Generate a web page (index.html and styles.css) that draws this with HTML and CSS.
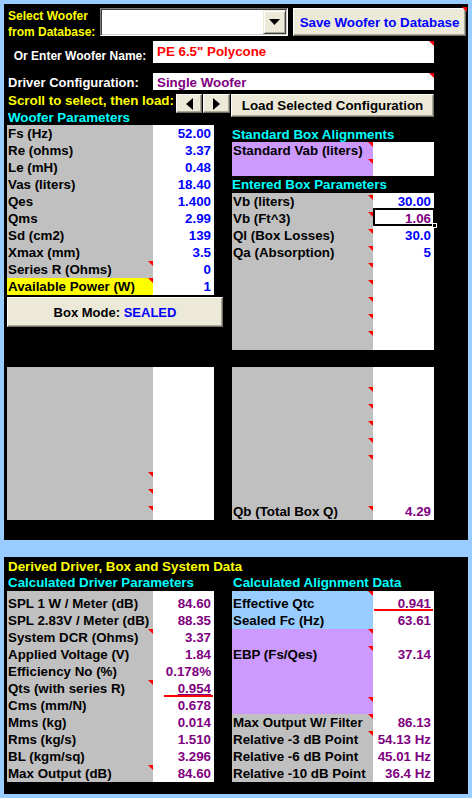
FILE: index.html
```html
<!DOCTYPE html>
<html>
<head>
<meta charset="utf-8">
<link rel="stylesheet" href="styles.css">
</head>
<body>
<div class="panel panel-top">
  <span class="tri tri-corner"></span>
  <div class="row row-select">
    <div class="select-label">Select Woofer<br>from Database:</div>
    <div class="combo">
      <div class="combo-field"></div>
      <div class="combo-btn"><svg width="11" height="6" viewBox="0 0 11 6"><polygon points="0,0 11,0 5.5,6" fill="#000"/></svg></div>
    </div>
    <div class="btn save-btn">Save Woofer to Database</div>
  </div>
  <div class="row row-name">
    <div class="name-label">Or Enter Woofer Name:</div>
    <div class="input input-name">PE 6.5" Polycone<span class="tri"></span></div>
  </div>
  <div class="row row-config">
    <div class="config-label">Driver Configuration:</div>
    <div class="input input-config">Single Woofer<span class="tri"></span></div>
  </div>
  <div class="row row-scroll">
    <div class="scroll-label">Scroll to select, then load:</div>
    <div class="btn arrow-btn"><svg width="7" height="12" viewBox="0 0 7 12"><polygon points="7,0 7,12 0,6" fill="#000"/></svg></div>
    <div class="btn arrow-btn arrow-right"><svg width="7" height="12" viewBox="0 0 7 12"><polygon points="0,0 0,12 7,6" fill="#000"/></svg></div>
    <div class="btn load-btn">Load Selected Configuration</div>
  </div>
  <div class="cols cols-top">
    <div class="col col-left">
      <div class="head cyan">Woofer Parameters</div>
      <div class="sheet sheet-left">
        <div class="lab">Fs (Hz)</div><div class="val blue">52.00</div>
        <div class="lab">Re (ohms)</div><div class="val blue">3.37</div>
        <div class="lab">Le (mH)</div><div class="val blue">0.48</div>
        <div class="lab">Vas (liters)</div><div class="val blue">18.40</div>
        <div class="lab">Qes</div><div class="val blue">1.400</div>
        <div class="lab">Qms</div><div class="val blue">2.99</div>
        <div class="lab">Sd (cm2)</div><div class="val blue">139</div>
        <div class="lab">Xmax (mm)</div><div class="val blue">3.5</div>
        <div class="lab">Series R (Ohms)<span class="tri"></span></div><div class="val blue">0</div>
        <div class="lab yellow-bg">Available Power (W)<span class="tri"></span></div><div class="val blue">1</div>
      </div>
      <div class="btn mode-btn"><span>Box Mode: <span class="blue">SEALED</span></span></div>
      <div class="sheet sheet-left sheet-lower">
        <div class="lab"></div><div class="val"></div>
        <div class="lab"></div><div class="val"></div>
        <div class="lab"></div><div class="val"></div>
        <div class="lab"></div><div class="val"></div>
        <div class="lab"></div><div class="val"></div>
        <div class="lab"></div><div class="val"></div>
        <div class="lab"><span class="tri tri-low"></span></div><div class="val"></div>
        <div class="lab"><span class="tri tri-low"></span></div><div class="val"></div>
        <div class="lab"><span class="tri tri-low"></span></div><div class="val"></div>
      </div>
    </div>
    <div class="col col-right">
      <div class="head cyan head-std">Standard Box Alignments</div>
      <div class="sheet sheet-right">
        <div class="lab purple-bg">Standard Vab (liters)<span class="tri"></span></div><div class="val"></div>
        <div class="lab purple-bg"><span class="tri"></span></div><div class="val"></div>
      </div>
      <div class="head cyan head-entered">Entered Box Parameters</div>
      <div class="sheet sheet-right sheet-entered">
        <div class="lab">Vb (liters)<span class="tri tri-mid"></span></div><div class="val blue">30.00</div>
        <div class="lab">Vb (Ft^3)<span class="tri tri-mid"></span></div><div class="val purple selected">1.06<span class="sel-box"><span class="sel-handle"></span></span></div>
        <div class="lab">Ql (Box Losses)<span class="tri tri-mid"></span></div><div class="val blue">30.0</div>
        <div class="lab">Qa (Absorption)<span class="tri tri-mid"></span></div><div class="val blue">5</div>
        <div class="lab"><span class="tri tri-mid"></span></div><div class="val"></div>
        <div class="lab"><span class="tri tri-mid"></span></div><div class="val"></div>
        <div class="lab"><span class="tri tri-mid"></span></div><div class="val"></div>
        <div class="lab"><span class="tri tri-mid"></span></div><div class="val"></div>
        <div class="lab"><span class="tri tri-mid"></span></div><div class="val"></div>
      </div>
      <div class="sheet sheet-right sheet-lower">
        <div class="lab"></div><div class="val"></div>
        <div class="lab"><span class="tri tri-low"></span></div><div class="val"></div>
        <div class="lab"><span class="tri tri-low"></span></div><div class="val"></div>
        <div class="lab"><span class="tri tri-low"></span></div><div class="val"></div>
        <div class="lab"><span class="tri tri-low"></span></div><div class="val"></div>
        <div class="lab"><span class="tri tri-low"></span></div><div class="val"></div>
        <div class="lab"></div><div class="val"></div>
        <div class="lab"></div><div class="val"></div>
        <div class="lab">Qb (Total Box Q)<span class="tri tri-low"></span></div><div class="val purple">4.29</div>
      </div>
    </div>
  </div>
</div>

<div class="panel panel-bottom">
  <div class="head yellow head-derived">Derived Driver, Box and System Data</div>
  <div class="cols">
    <div class="col col-left">
      <div class="head cyan head-calc">Calculated Driver Parameters</div>
      <div class="sheet sheet-left sheet-calc">
        <div class="lab">SPL 1 W / Meter (dB)</div><div class="val purple">84.60</div>
        <div class="lab">SPL 2.83V / Meter (dB)</div><div class="val purple">88.35</div>
        <div class="lab">System DCR (Ohms)<span class="tri"></span></div><div class="val purple">3.37</div>
        <div class="lab">Applied Voltage (V)</div><div class="val purple">1.84</div>
        <div class="lab">Efficiency No (%)</div><div class="val purple">0.178%</div>
        <div class="lab">Qts (with series R)<span class="tri"></span></div><div class="val purple"><u>0.954</u><span class="red-line red-line-qts"></span></div>
        <div class="lab">Cms (mm/N)</div><div class="val purple">0.678</div>
        <div class="lab">Mms (kg)</div><div class="val purple">0.014</div>
        <div class="lab">Rms (kg/s)</div><div class="val purple">1.510</div>
        <div class="lab">BL (kgm/sq)</div><div class="val purple">3.296</div>
        <div class="lab">Max Output (dB)<span class="tri"></span></div><div class="val purple">84.60</div>
      </div>
    </div>
    <div class="col col-right">
      <div class="head cyan head-calc">Calculated Alignment Data</div>
      <div class="sheet sheet-right sheet-align">
        <div class="lab lblue-bg">Effective Qtc<span class="tri tri-pad"></span></div><div class="val purple"><u>0.941</u><span class="red-line red-line-qtc"></span></div>
        <div class="lab lblue-bg">Sealed Fc (Hz)</div><div class="val purple">63.61</div>
        <div class="lab purple-bg"><span class="tri"></span></div><div class="val"></div>
        <div class="lab purple-bg">EBP (Fs/Qes)<span class="tri"></span></div><div class="val purple">37.14</div>
        <div class="lab purple-bg"></div><div class="val"></div>
        <div class="lab purple-bg"></div><div class="val"></div>
        <div class="lab purple-bg"><span class="tri"></span></div><div class="val"></div>
        <div class="lab">Max Output W/ Filter<span class="tri"></span></div><div class="val purple">86.13</div>
        <div class="lab">Relative -3 dB Point<span class="tri"></span></div><div class="val purple">54.13 Hz</div>
        <div class="lab">Relative -6 dB Point</div><div class="val purple">45.01 Hz</div>
        <div class="lab">Relative -10 dB Point</div><div class="val purple">36.4 Hz</div>
      </div>
    </div>
  </div>
</div>
</body>
</html>
```

FILE: styles.css
```css
* { box-sizing: border-box; }

html, body {
  margin: 0;
  padding: 0;
}

body {
  background: #99ccff;
  font-family: "Liberation Sans", Arial, sans-serif;
  font-weight: bold;
  font-size: 13.33px;
  color: #000;
  width: 472px;
  height: 798px;
  overflow: hidden;
}

.panel {
  background: #000;
  margin-left: 4px;
  width: 464px;
  position: relative;
}

.panel-top {
  margin-top: 4px;
  height: 536px;
  padding: 4px 0 0 3px;
}

.panel-bottom {
  margin-top: 17px;
  height: 237px;
  padding: 1px 0 0 3px;
}

.row { display: flex; }

/* row 1 */
.row-select { height: 28px; }

.select-label {
  width: 93px;
  padding-left: 1px;
  color: #ffff00;
  font-size: 12px;
  line-height: 16px;
  white-space: nowrap;
}

.combo {
  width: 188px;
  height: 28px;
  display: flex;
  background: #fff;
  border: 1px solid;
  border-color: #808080 #ffffff #ffffff #808080;
  padding: 0;
  box-shadow: inset 1px 1px 0 #404040, inset -1px -1px 0 #d4d0c8;
}

.combo-field { flex: 1; }

.combo-btn {
  width: 23px;
  margin: 1px 1px 1px 0;
  background: #ece9d8;
  border: 1px solid;
  border-color: #ece9d8 #404040 #404040 #ece9d8;
  box-shadow: inset 1px 1px 0 #fff, inset -1px -1px 0 #aca899;
  display: flex;
  align-items: center;
  justify-content: center;
}

.btn {
  background: #ece9d8;
  border: 1px solid;
  border-color: #ffffff #716f64 #716f64 #ffffff;
  box-shadow: inset -1px -1px 0 #aca899;
  display: flex;
  align-items: center;
  justify-content: center;
  white-space: nowrap;
}

.save-btn {
  margin-left: 5px;
  width: 173px;
  height: 28px;
  color: #0000ff;
}

/* row 2 */
.row-name {
  margin-top: 5px;
  height: 22px;
}

.name-label {
  width: 146px;
  color: #fff;
  text-align: center;
  font-size: 12px;
  line-height: 14px;
  padding-top: 8px;
  white-space: nowrap;
}

.input {
  position: relative;
  width: 281px;
  background: #fff;
  padding-left: 4px;
  white-space: nowrap;
}

.input-name {
  color: #ff0000;
  line-height: 22px;
}

/* row 3 */
.row-config {
  margin-top: 10px;
  height: 17px;
}

.config-label {
  width: 146px;
  color: #fff;
  padding-left: 1px;
  font-size: 13px;
  line-height: 19px;
  white-space: nowrap;
}

.input-config {
  color: #800080;
  line-height: 19px;
  height: 17px;
}

/* row 4 */
.row-scroll {
  margin-top: 4px;
  height: 23px;
}

.scroll-label {
  width: 169px;
  color: #ffff00;
  padding-left: 1px;
  line-height: 13px;
  white-space: nowrap;
}

.arrow-btn {
  width: 26px;
  height: 19px;
}

.arrow-right {
  width: 27px;
  margin-left: 1px;
}

.load-btn {
  margin-left: 1px;
  width: 203px;
  height: 23px;
}

/* columns */
.cols { display: flex; }

.cols-top { margin-top: -7px; }

.col-left { width: 225px; }

.col-right { width: 202px; }

.head {
  white-space: nowrap;
  line-height: 15px;
}

.cyan { color: #00ffff; }
.yellow { color: #ffff00; }
.blue { color: #0000ff; }
.purple { color: #800080; }

.head-std { margin-top: 17px; }
.head-entered { line-height: 17px; }
.head-derived { line-height: 17px; padding-left: 1px; }
.head-calc { line-height: 16px; padding-left: 1px; }
.col-left > .head { padding-left: 1px; }

.sheet {
  display: grid;
  grid-auto-rows: 17px;
  line-height: 17px;
}

.sheet-left { grid-template-columns: 146px 61px; width: 207px; }
.sheet-right { grid-template-columns: 141px 61px; width: 202px; }

.lab {
  position: relative;
  background: #c0c0c0;
  padding-left: 1px;
  white-space: nowrap;
}

.val {
  position: relative;
  background: #fff;
  text-align: right;
  padding-right: 3px;
  white-space: nowrap;
}

.yellow-bg { background: #ffff00; }
.purple-bg { background: #cc99ff; }
.lblue-bg { background: #99ccff; }

.mode-btn {
  margin-top: 2px;
  width: 216px;
  height: 30px;
  font-size: 13px;
}

.col-left .sheet-lower { margin-top: 40px; }
.col-right .sheet-lower { margin-top: 17px; }

.sheet-entered {
  padding-bottom: 4px;
  background: linear-gradient(to right, #c0c0c0 141px, #fff 141px);
}

.sheet-calc {
  padding-top: 4px;
  background: linear-gradient(to right, #c0c0c0 146px, #fff 146px);
}

.sheet-align {
  padding-top: 4px;
  background: linear-gradient(to right, #99ccff 141px, #fff 141px);
}

/* comment indicator */
.tri {
  position: absolute;
  top: 0;
  right: 0;
  width: 0;
  height: 0;
  border-top: 5px solid #ff0000;
  border-left: 5px solid transparent;
}

.tri-mid { top: 2px; }
.tri-low { top: 3px; }
.tri-pad { top: -4px; }

.tri-corner {
  top: 3px;
  right: 1px;
}

.selected { overflow: visible; }

.sel-box {
  position: absolute;
  top: -2px;
  left: 0;
  right: -1px;
  bottom: 1px;
  border: 2px solid #000;
}

.sel-handle {
  position: absolute;
  right: -4px;
  bottom: -4px;
  width: 5px;
  height: 5px;
  background: #000;
  border: 1px solid #fff;
}

u { text-decoration-thickness: 1px; text-underline-offset: 1px; }

.red-line {
  position: absolute;
  height: 2px;
  background: #ff0000;
}

.red-line-qts { left: 11px; right: 1px; bottom: 0; }
.red-line-qtc { left: 1px; right: 1px; bottom: 1px; }
```
